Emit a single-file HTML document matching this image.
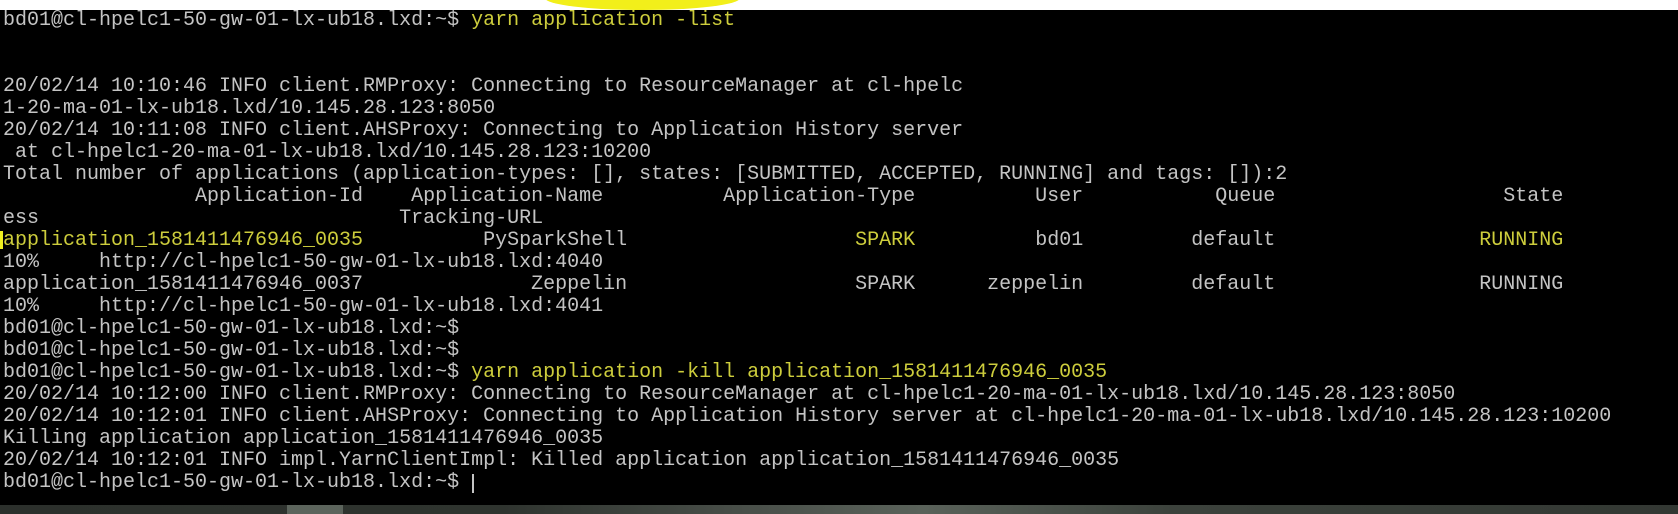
<!DOCTYPE html>
<html><head><meta charset="utf-8"><style>
html,body{margin:0;padding:0;background:#fff;}
#wrap{position:relative;width:1678px;height:514px;overflow:hidden;background:#fff;}
#term{position:absolute;left:0;top:10px;width:1678px;height:495px;background:#000;}
#blob{position:absolute;left:545px;top:-14px;width:195px;height:24px;border-radius:50%;background:#f2ef1a;}
.l{position:absolute;left:3px;height:22px;line-height:22px;font-family:"Liberation Mono",monospace;font-size:20px;color:#c4c4c4;white-space:pre;}
.y{color:#cdcd3c;}
#bar{position:absolute;left:0;top:505px;width:1678px;height:9px;background:linear-gradient(90deg,#2c302c 0%,#2f342f 30%,#4a504a 45%,#5a625a 55%,#3c423c 70%,#333833 100%);}
#blk{position:absolute;left:287px;top:505px;width:56px;height:9px;background:#5c645c;}
#mark{position:absolute;left:0;top:231px;width:3px;height:18px;background:#f0f020;}
#cur{position:absolute;left:472px;top:474px;width:2px;height:19px;background:#c4c4c4;}
</style></head><body><div id="wrap">
<div id="blob"></div>
<div id="term"></div>
<div class="l" style="top:10px">bd01@cl-hpelc1-50-gw-01-lx-ub18.lxd:~$ <span class="y">yarn application -list</span></div>
<div class="l" style="top:76px">20/02/14 10:10:46 INFO client.RMProxy: Connecting to ResourceManager at cl-hpelc</div>
<div class="l" style="top:98px">1-20-ma-01-lx-ub18.lxd/10.145.28.123:8050</div>
<div class="l" style="top:120px">20/02/14 10:11:08 INFO client.AHSProxy: Connecting to Application History server</div>
<div class="l" style="top:142px"> at cl-hpelc1-20-ma-01-lx-ub18.lxd/10.145.28.123:10200</div>
<div class="l" style="top:164px">Total number of applications (application-types: [], states: [SUBMITTED, ACCEPTED, RUNNING] and tags: []):2</div>
<div class="l" style="top:186px">                Application-Id    Application-Name          Application-Type          User           Queue                   State</div>
<div class="l" style="top:208px">ess                              Tracking-URL</div>
<div class="l" style="top:230px"><span class="y">application_1581411476946_0035</span>          PySparkShell                   <span class="y">SPARK</span>          bd01         default                 <span class="y">RUNNING</span></div>
<div class="l" style="top:252px">10%     http://cl-hpelc1-50-gw-01-lx-ub18.lxd:4040</div>
<div class="l" style="top:274px">application_1581411476946_0037              Zeppelin                   SPARK      zeppelin         default                 RUNNING</div>
<div class="l" style="top:296px">10%     http://cl-hpelc1-50-gw-01-lx-ub18.lxd:4041</div>
<div class="l" style="top:318px">bd01@cl-hpelc1-50-gw-01-lx-ub18.lxd:~$</div>
<div class="l" style="top:340px">bd01@cl-hpelc1-50-gw-01-lx-ub18.lxd:~$</div>
<div class="l" style="top:362px">bd01@cl-hpelc1-50-gw-01-lx-ub18.lxd:~$ <span class="y">yarn application -kill application_1581411476946_0035</span></div>
<div class="l" style="top:384px">20/02/14 10:12:00 INFO client.RMProxy: Connecting to ResourceManager at cl-hpelc1-20-ma-01-lx-ub18.lxd/10.145.28.123:8050</div>
<div class="l" style="top:406px">20/02/14 10:12:01 INFO client.AHSProxy: Connecting to Application History server at cl-hpelc1-20-ma-01-lx-ub18.lxd/10.145.28.123:10200</div>
<div class="l" style="top:428px">Killing application application_1581411476946_0035</div>
<div class="l" style="top:450px">20/02/14 10:12:01 INFO impl.YarnClientImpl: Killed application application_1581411476946_0035</div>
<div class="l" style="top:472px">bd01@cl-hpelc1-50-gw-01-lx-ub18.lxd:~$</div>
<div id="cur"></div>
<div id="mark"></div>
<div id="bar"></div>
<div id="blk"></div>
</div></body></html>
